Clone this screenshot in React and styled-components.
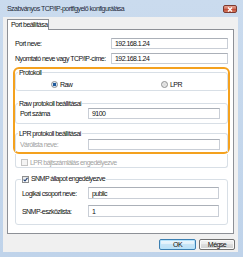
import styled, { createGlobalStyle } from "styled-components";

const GlobalStyle = createGlobalStyle`
  html, body {
    margin: 0;
    padding: 0;
  }
  body {
    background: #c4d6ec;
    font-family: "Liberation Sans", Arial, sans-serif;
    font-size: 7px;
    letter-spacing: -0.55px;
    color: #111;
  }
`;

const App = () => {
  return (
    <>
      <GlobalStyle />
      <Window>
        <TitleBar>
          <Title>Szabványos TCP/IP-portfigyelő konfigurálása</Title>
          <CloseButton>
            <svg width="6" height="5" viewBox="0 0 6 5">
              <path d="M1 0.5 L5 4.5 M5 0.5 L1 4.5" stroke="#fff" strokeWidth="1.3" />
            </svg>
          </CloseButton>
        </TitleBar>
        <Client>
          <TabStrip>
            <Tab>Port beállítása</Tab>
          </TabStrip>
          <Panel>
            <Fields $pad="0 2px">
              <FieldRow $labelWidth={96}>
                <Label>Port neve:</Label>
                <Input>192.168.1.24</Input>
              </FieldRow>
              <FieldRow $labelWidth={96}>
                <Label>Nyomtató neve vagy TCP/IP-címe:</Label>
                <Input>192.168.1.24</Input>
              </FieldRow>
            </Fields>

            <Highlight>
              <GroupBox $pad="4px 4px 2px 4px">
                <Legend>Protokoll</Legend>
                <RadioRow>
                  <RadioOption>
                    <Radio $checked />
                    Raw
                  </RadioOption>
                  <RadioOption>
                    <Radio />
                    LPR
                  </RadioOption>
                </RadioRow>
              </GroupBox>

              <GroupBox $pad="1px 7px 4px 4px" $mt={9}>
                <Legend>Raw protokoll beállításai</Legend>
                <FieldRow $labelWidth={68}>
                  <Label>Port száma</Label>
                  <Input>9100</Input>
                </FieldRow>
              </GroupBox>

              <GroupBox $pad="2px 7px 2px 4px" $mt={6} $open>
                <Legend>LPR protokoll beállításai</Legend>
                <FieldRow $labelWidth={68}>
                  <Label $disabled>Várólista neve:</Label>
                  <Input />
                </FieldRow>
              </GroupBox>
            </Highlight>

            <GroupTail>
              <CheckOption $disabled>
                <Checkbox $disabled />
                LPR bájtszámlálás engedélyezve
              </CheckOption>
            </GroupTail>

            <GroupBox $pad="4px 8px 7px 6px" $mt={7} $inset>
              <Legend $wide>
                <CheckOption>
                  <Checkbox $checked>
                    <svg width="5" height="5" viewBox="0 0 5 5">
                      <path d="M0.6 2.6 L2 4 L4.5 0.8" stroke="#1c3c74" strokeWidth="1.1" fill="none" />
                    </svg>
                  </Checkbox>
                  SNMP állapot engedélyezve
                </CheckOption>
              </Legend>
              <Fields $gap={6}>
                <FieldRow $labelWidth={66} $h={12}>
                  <Label>Logikai csoport neve:</Label>
                  <Input>public</Input>
                </FieldRow>
                <FieldRow $labelWidth={66} $h={12}>
                  <Label>SNMP-eszközlista:</Label>
                  <Input>1</Input>
                </FieldRow>
              </Fields>
            </GroupBox>
          </Panel>
          <ButtonRow>
            <Button $default>OK</Button>
            <Button>Mégse</Button>
          </ButtonRow>
        </Client>
      </Window>
    </>
  );
};

const Window = styled.div`
  width: 243px;
  height: 257px;
  box-sizing: border-box;
  display: flex;
  flex-direction: column;
  background: linear-gradient(#cadbee, #bfd3ea);
`;

const TitleBar = styled.div`
  height: 17px;
  display: flex;
  align-items: center;
  justify-content: space-between;
  padding: 0 6px 0 7px;
`;

const Title = styled.span`
  color: #1e2a3a;
  white-space: nowrap;
`;

const CloseButton = styled.div`
  width: 14px;
  height: 8px;
  box-sizing: border-box;
  border: 1px solid #7c3a31;
  border-radius: 2px;
  background: linear-gradient(#e7a595, #d0705e 45%, #c04a35 55%, #d77a5f);
  display: flex;
  align-items: center;
  justify-content: center;
  margin-top: 1px;
`;

const Client = styled.div`
  flex: 1;
  margin: 0 5px 5px 3px;
  background: #f0f0f0;
  padding: 2px 0 0 4px;
  display: flex;
  flex-direction: column;
`;

const TabStrip = styled.div`
  display: flex;
  height: 11px;
  margin-bottom: -1px;
  position: relative;
  z-index: 1;
`;

const Tab = styled.div`
  width: 42px;
  box-sizing: border-box;
  border: 1px solid #8d9096;
  border-bottom: none;
  background: #fff;
  padding-left: 3px;
  line-height: 9px;
  white-space: nowrap;
`;

const Panel = styled.div`
  width: 227px;
  height: 205px;
  box-sizing: border-box;
  border: 1px solid #8d9096;
  background: #fff;
  padding: 8px 3px 0 5px;
`;

const Fields = styled.div`
  display: flex;
  flex-direction: column;
  gap: ${(p) => p.$gap ?? 4}px;
  padding: ${(p) => p.$pad ?? "0"};
`;

const FieldRow = styled.div`
  display: grid;
  grid-template-columns: ${(p) => p.$labelWidth}px 1fr;
  align-items: center;
  height: ${(p) => p.$h ?? 11}px;
`;

const Label = styled.span`
  white-space: nowrap;
  color: ${(p) => (p.$disabled ? "#a2a2a2" : "#111")};
`;

const Input = styled.div`
  height: 100%;
  box-sizing: border-box;
  border: 1px solid #c9ced6;
  border-top-color: #abb0b8;
  background: #fff;
  padding: 0 3px;
  display: flex;
  align-items: center;
  color: #111;
`;

const Highlight = styled.div`
  margin-top: 3px;
  border: 2px solid #f4a11e;
  border-radius: 6px;
`;

const GroupBox = styled.fieldset`
  margin: ${(p) => p.$mt ?? 0}px ${(p) => (p.$inset ? 2 : 0)}px 0;
  padding: ${(p) => p.$pad};
  min-width: 0;
  border: 1px solid #d8dfe6;
  border-radius: 3px;
  ${(p) =>
    p.$open &&
    `
    border-bottom: none;
    border-bottom-left-radius: 0;
    border-bottom-right-radius: 0;
  `}
`;

const Legend = styled.legend`
  padding: 0 1px;
  margin-left: ${(p) => (p.$wide ? -1 : -2)}px;
  line-height: ${(p) => (p.$wide ? 8 : 7)}px;
  color: #111;
  white-space: nowrap;
`;

const GroupTail = styled.div`
  margin: 0 2px;
  border: 1px solid #d8dfe6;
  border-top: none;
  border-radius: 0 0 3px 3px;
  padding: 4px 5px 1px;
`;

const RadioRow = styled.div`
  display: grid;
  grid-template-columns: 110px auto;
  height: 8px;
  padding-left: 31px;
`;

const RadioOption = styled.label`
  display: flex;
  align-items: center;
  gap: 2px;
  height: 8px;
`;

const Radio = styled.span`
  width: 7px;
  height: 7px;
  box-sizing: border-box;
  border-radius: 50%;
  border: 1px solid #8e8f8f;
  background: ${(p) =>
    p.$checked
      ? "radial-gradient(circle, #1f5a9c 0 1.6px, #dbe6f2 2px)"
      : "radial-gradient(circle, #d9d9d9, #f2f2f2)"};
`;

const CheckOption = styled.label`
  display: flex;
  align-items: center;
  gap: 2px;
  height: 8px;
  white-space: nowrap;
  color: ${(p) => (p.$disabled ? "#a2a2a2" : "#111")};
`;

const Checkbox = styled.span`
  width: 7px;
  height: 7px;
  box-sizing: border-box;
  border: 1px solid ${(p) => (p.$disabled ? "#c4c4c4" : "#8e8f8f")};
  background: ${(p) => (p.$disabled ? "#f4f4f4" : "linear-gradient(#e6e6e6, #fdfdfd)")};
  display: flex;
  align-items: center;
  justify-content: center;
`;

const ButtonRow = styled.div`
  display: flex;
  justify-content: flex-end;
  gap: 3px;
  padding: 5px 3px 0 0;
`;

const Button = styled.div`
  width: ${(p) => (p.$default ? 37 : 36)}px;
  height: 11px;
  box-sizing: border-box;
  border: 1px solid ${(p) => (p.$default ? "#3c7fb1" : "#707070")};
  border-radius: 2px;
  background: ${(p) =>
    p.$default
      ? "linear-gradient(#edf7fd, #dff0fa 50%, #c6e5f7 50%, #bde0f5)"
      : "linear-gradient(#f2f2f2, #ebebeb 50%, #dddddd 50%, #cfcfcf)"};
  box-shadow: ${(p) => (p.$default ? "inset 0 0 0 1px #b6e3fb" : "inset 0 0 0 1px #fafafa")};
  display: flex;
  align-items: center;
  justify-content: center;
  color: #111;
`;

export default App;
